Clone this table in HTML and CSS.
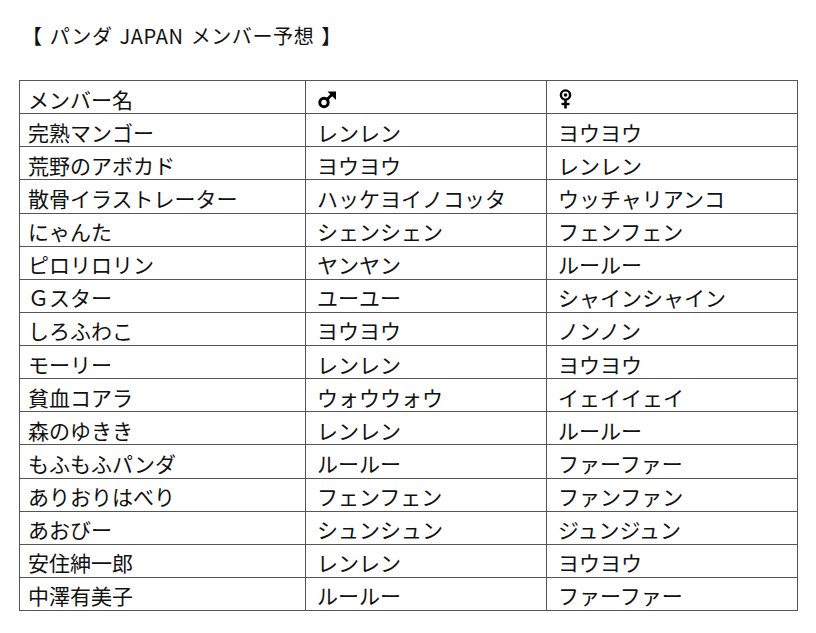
FILE: index.html
```html
<!DOCTYPE html>
<html lang="ja">
<head>
<meta charset="utf-8">
<title>パンダ JAPAN メンバー予想</title>
<link rel="stylesheet" href="styles.css">
</head>
<body>
<div class="page">
  <h1 class="title">【 パンダ JAPAN メンバー予想 】</h1>
  <table class="members">
    <colgroup>
      <col class="c-name"><col class="c-male"><col class="c-female">
    </colgroup>
    <tr>
      <td class="first">メンバー名</td>
      <td><svg class="icon male" width="19" height="18" viewBox="0 0 19 18" aria-label="♂"><circle cx="6" cy="11.5" r="4.2" fill="none" stroke="#000" stroke-width="3"/><line x1="8.5" y1="9" x2="14" y2="3.5" stroke="#000" stroke-width="2.8"/><polygon points="9.5,0.5 18,0.5 18,9" fill="#000"/></svg></td>
      <td><svg class="icon female" width="13" height="20" viewBox="0 0 13 20" aria-label="♀"><circle cx="6.5" cy="6" r="4.6" fill="none" stroke="#000" stroke-width="2.4"/><circle cx="6.5" cy="6" r="1.8" fill="#000"/><line x1="6.5" y1="10" x2="6.5" y2="19.5" stroke="#000" stroke-width="2.6"/><line x1="2.5" y1="15" x2="10.5" y2="15" stroke="#000" stroke-width="2.4"/></svg></td>
    </tr>
    <tr><td class="first">完熟マンゴー</td><td>レンレン</td><td>ヨウヨウ</td></tr>
    <tr><td class="first">荒野のアボカド</td><td>ヨウヨウ</td><td>レンレン</td></tr>
    <tr><td class="first">散骨イラストレーター</td><td>ハッケヨイノコッタ</td><td>ウッチャリアンコ</td></tr>
    <tr><td class="first">にゃんた</td><td>シェンシェン</td><td>フェンフェン</td></tr>
    <tr><td class="first">ピロリロリン</td><td>ヤンヤン</td><td>ルールー</td></tr>
    <tr><td class="first">Ｇスター</td><td>ユーユー</td><td>シャインシャイン</td></tr>
    <tr><td class="first">しろふわこ</td><td>ヨウヨウ</td><td>ノンノン</td></tr>
    <tr><td class="first">モーリー</td><td>レンレン</td><td>ヨウヨウ</td></tr>
    <tr><td class="first">貧血コアラ</td><td>ウォウウォウ</td><td>イェイイェイ</td></tr>
    <tr><td class="first">森のゆきき</td><td>レンレン</td><td>ルールー</td></tr>
    <tr><td class="first">もふもふパンダ</td><td>ルールー</td><td>ファーファー</td></tr>
    <tr><td class="first">ありおりはべり</td><td>フェンフェン</td><td>ファンファン</td></tr>
    <tr><td class="first">あおびー</td><td>シュンシュン</td><td>ジュンジュン</td></tr>
    <tr><td class="first">安住紳一郎</td><td>レンレン</td><td>ヨウヨウ</td></tr>
    <tr><td class="first">中澤有美子</td><td>ルールー</td><td>ファーファー</td></tr>
  </table>
</div>
</body>
</html>
```

FILE: styles.css
```css
html, body {
  margin: 0;
  padding: 0;
  background: #fff;
}
body {
  font-family: "Noto Sans CJK JP", "Liberation Sans", sans-serif;
  color: #111;
}
.page {
  padding: 22px 0 0 19px;
}
.title {
  margin: 0 0 0 3px;
  font-size: 20px;
  font-weight: normal;
  line-height: 28px;
  height: 58px;
  letter-spacing: 0.6px;
  word-spacing: 2px;
}
.members {
  border-collapse: collapse;
  table-layout: fixed;
  width: 778px;
  border: 1.5px solid #6b6b6b;
}
.c-name { width: 286px; }
.c-male { width: 241px; }
.c-female { width: 251px; }
.members tr {
  height: 33.125px;
}
.members td {
  border: 1px solid #555;
  font-size: 21px;
  line-height: 24px;
  padding: 5px 6px 2px 11px;
  white-space: nowrap;
  vertical-align: middle;
}
.members td.first {
  padding-left: 8px;
}
.icon {
  display: block;
}
.male {
  margin: 2px 0 0 1px;
}
.female {
  margin: 0 0 0 1px;
}
```
